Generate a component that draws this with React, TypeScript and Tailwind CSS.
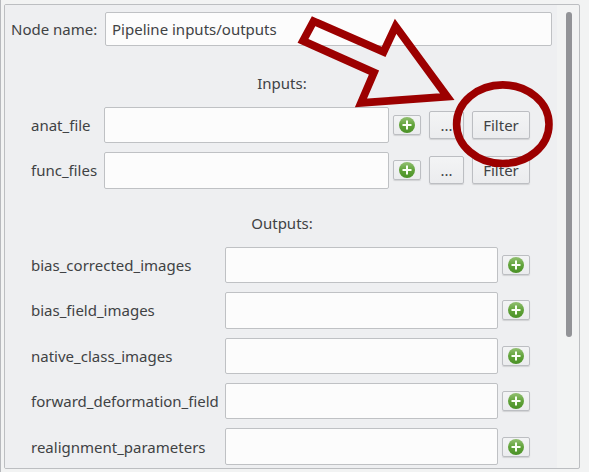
const inputs = ["anat_file", "func_files"];
const outputs = [
  "bias_corrected_images",
  "bias_field_images",
  "native_class_images",
  "forward_deformation_field",
  "realignment_parameters",
];

const buttonStyle =
  "shrink-0 rounded-[2px] border border-[#bcbec2] bg-linear-to-b from-[#f3f4f5] to-[#ebecee] shadow-[0_1px_1px_rgba(0,0,0,0.12)]";
const fieldStyle =
  "shrink-0 rounded-[2px] border border-[#bfc1c4] bg-[#fcfcfc] outline-none";

function AddButton() {
  return (
    <button className={`${buttonStyle} flex h-5 w-7 items-center justify-center`}>
      <svg width="16" height="16" viewBox="0 0 16 16" className="shrink-0">
        <defs>
          <linearGradient id="green" x1="0" y1="0" x2="0" y2="1">
            <stop offset="0" stopColor="#93c072" />
            <stop offset="0.5" stopColor="#61a33a" />
            <stop offset="1" stopColor="#4a9126" />
          </linearGradient>
        </defs>
        <circle cx="8" cy="8" r="8" fill="url(#green)" />
        <path d="M8 3.5v9M3.5 8h9" stroke="#fbfff7" strokeWidth="2" />
      </svg>
    </button>
  );
}

function InputRow({ name }: { name: string }) {
  return (
    <div className="flex h-[36.4px] items-center">
      <label className="w-[73px] shrink-0 whitespace-nowrap">{name}</label>
      <input aria-label={name} className={`${fieldStyle} h-[36.4px] w-[285px]`} />
      <div className="ml-1 flex items-center gap-2">
        <AddButton />
        <button className={`${buttonStyle} h-[28px] w-[35px] leading-[26px]`}>...</button>
        <button className={`${buttonStyle} h-[28px] w-[58px] leading-[26px]`}>Filter</button>
      </div>
    </div>
  );
}

function OutputRow({ name }: { name: string }) {
  return (
    <div className="flex h-[36.4px] items-center">
      <label className="w-[194px] shrink-0 whitespace-nowrap">{name}</label>
      <input aria-label={name} className={`${fieldStyle} mr-1 h-[36.4px] w-[273px]`} />
      <AddButton />
    </div>
  );
}

function Annotation() {
  return (
    <svg
      className="pointer-events-none absolute inset-0"
      width="589"
      height="472"
      viewBox="0 0 589 472"
      fill="none"
      stroke="#9c0000"
    >
      <path
        d="M313.6 21.2L383.6 51.8L395.6 26.3L447.2 96.7L361 102.8L374 72.6L303 40.8Z"
        strokeWidth="7.8"
        strokeMiterlimit="10"
      />
      <ellipse cx="502.8" cy="124.2" rx="46.2" ry="39.3" strokeWidth="7.6" />
    </svg>
  );
}

export default function App() {
  return (
    <main className="relative h-[472px] w-[589px] overflow-hidden bg-[#f2f3f3] pt-1 pl-1 font-['Noto_Sans',sans-serif] text-[15px] leading-5 text-[#404244] shadow-[inset_1px_0_0_#b7b9bd]">
      <section className="flex h-[465px] w-[576px] overflow-hidden rounded-[2px] border border-[#bcbec1]">
        <div className="w-[552px] shrink-0 bg-[#eeeff1] pt-[7px]">
          <div className="flex items-center pl-[6px]">
            <label className="w-[94px] shrink-0 whitespace-nowrap">Node name:</label>
            <input
              aria-label="Node name"
              defaultValue="Pipeline inputs/outputs"
              className={`${fieldStyle} h-[34px] w-[447px] px-[6px]`}
            />
          </div>
          <h2 className="mt-[27px] h-5 pl-[2px] text-center">Inputs:</h2>
          <div className="mt-[14px] flex flex-col gap-[8.8px] pl-[26px]">
            {inputs.map((name) => (
              <InputRow key={name} name={name} />
            ))}
          </div>
          <h2 className="mt-[24.4px] h-5 pl-[2px] text-center">Outputs:</h2>
          <div className="mt-[13.9px] flex flex-col gap-[9px] pl-[26px]">
            {outputs.map((name) => (
              <OutputRow key={name} name={name} />
            ))}
          </div>
        </div>
        <div className="flex grow pt-[7px] pl-[9px]">
          <div className="h-[325px] w-[6px] rounded-full bg-[#929397]" />
        </div>
      </section>
      <Annotation />
    </main>
  );
}
